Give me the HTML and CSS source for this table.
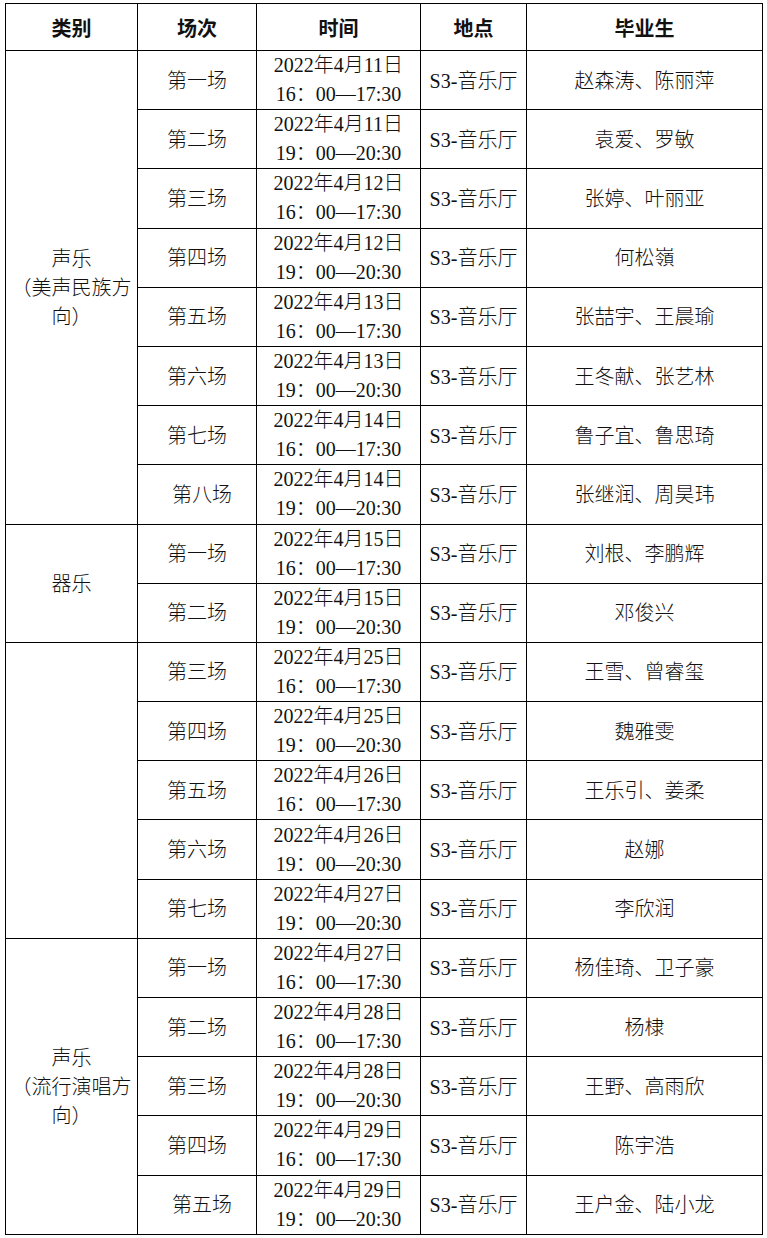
FILE: index.html
```html
<!DOCTYPE html>
<html lang="zh-CN">
<head>
<meta charset="utf-8">
<title>毕业音乐会安排</title>
<link rel="stylesheet" href="styles.css">
</head>
<body>
<table class="schedule">
  <colgroup>
    <col class="c-cat"><col class="c-round"><col class="c-time"><col class="c-place"><col class="c-names">
  </colgroup>
  <thead>
    <tr class="head"><th>类别</th><th>场次</th><th>时间</th><th>地点</th><th>毕业生</th></tr>
  </thead>
  <tbody>
    <tr><td rowspan="8" class="cat">声乐<br>（美声民族方向）</td><td>第一场</td><td class="time">2022年4月11日<br>16：00—17:30</td><td>S3-音乐厅</td><td>赵森涛、陈丽萍</td></tr>
    <tr><td>第二场</td><td class="time">2022年4月11日<br>19：00—20:30</td><td>S3-音乐厅</td><td>袁爱、罗敏</td></tr>
    <tr><td>第三场</td><td class="time">2022年4月12日<br>16：00—17:30</td><td>S3-音乐厅</td><td>张婷、叶丽亚</td></tr>
    <tr><td>第四场</td><td class="time">2022年4月12日<br>19：00—20:30</td><td>S3-音乐厅</td><td>何松嶺</td></tr>
    <tr><td>第五场</td><td class="time">2022年4月13日<br>16：00—17:30</td><td>S3-音乐厅</td><td>张喆宇、王晨瑜</td></tr>
    <tr><td>第六场</td><td class="time">2022年4月13日<br>19：00—20:30</td><td>S3-音乐厅</td><td>王冬献、张艺林</td></tr>
    <tr><td>第七场</td><td class="time">2022年4月14日<br>16：00—17:30</td><td>S3-音乐厅</td><td>鲁子宜、鲁思琦</td></tr>
    <tr><td class="shift">第八场</td><td class="time">2022年4月14日<br>19：00—20:30</td><td>S3-音乐厅</td><td>张继润、周昊玮</td></tr>
    <tr><td rowspan="2" class="cat">器乐</td><td>第一场</td><td class="time">2022年4月15日<br>16：00—17:30</td><td>S3-音乐厅</td><td>刘根、李鹏辉</td></tr>
    <tr><td>第二场</td><td class="time">2022年4月15日<br>19：00—20:30</td><td>S3-音乐厅</td><td>邓俊兴</td></tr>
    <tr><td rowspan="5" class="cat"></td><td>第三场</td><td class="time">2022年4月25日<br>16：00—17:30</td><td>S3-音乐厅</td><td>王雪、曾睿玺</td></tr>
    <tr><td>第四场</td><td class="time">2022年4月25日<br>19：00—20:30</td><td>S3-音乐厅</td><td>魏雅雯</td></tr>
    <tr><td>第五场</td><td class="time">2022年4月26日<br>16：00—17:30</td><td>S3-音乐厅</td><td>王乐引、姜柔</td></tr>
    <tr><td>第六场</td><td class="time">2022年4月26日<br>19：00—20:30</td><td>S3-音乐厅</td><td>赵娜</td></tr>
    <tr><td>第七场</td><td class="time">2022年4月27日<br>19：00—20:30</td><td>S3-音乐厅</td><td>李欣润</td></tr>
    <tr><td rowspan="5" class="cat">声乐<br>（流行演唱方向）</td><td>第一场</td><td class="time">2022年4月27日<br>16：00—17:30</td><td>S3-音乐厅</td><td>杨佳琦、卫子豪</td></tr>
    <tr><td>第二场</td><td class="time">2022年4月28日<br>16：00—17:30</td><td>S3-音乐厅</td><td>杨棣</td></tr>
    <tr><td>第三场</td><td class="time">2022年4月28日<br>19：00—20:30</td><td>S3-音乐厅</td><td>王野、高雨欣</td></tr>
    <tr><td>第四场</td><td class="time">2022年4月29日<br>16：00—17:30</td><td>S3-音乐厅</td><td>陈宇浩</td></tr>
    <tr><td class="shift">第五场</td><td class="time">2022年4月29日<br>19：00—20:30</td><td>S3-音乐厅</td><td>王户金、陆小龙</td></tr>
  </tbody>
</table>
</body>
</html>
```

FILE: styles.css
```css
html, body {
  margin: 0;
  padding: 0;
  background: #fff;
}

body {
  padding: 3px 0 0 5px;
  font-family: "Liberation Serif", "Noto Sans CJK SC", serif;
  font-size: 20px;
  font-weight: 300;
  color: #111;
}

.schedule {
  border-collapse: collapse;
  table-layout: fixed;
  width: 757px;
}

.c-cat { width: 132px; }
.c-round { width: 119px; }
.c-time { width: 164px; }
.c-place { width: 106px; }
.c-names { width: 236px; }

.schedule th,
.schedule td {
  border: 1px solid #000;
  text-align: center;
  vertical-align: middle;
  padding: 2px 4px 0;
  line-height: 29px;
  white-space: nowrap;
}

.schedule td.cat {
  white-space: normal;
  padding: 2px 5px 0;
}

.schedule th {
  font-weight: 700;
  font-family: "Noto Sans CJK SC", sans-serif;
  height: 46px;
  padding: 0;
}

.schedule tbody tr {
  height: 59.2px;
}

.schedule td.time {
  padding: 0;
}

.schedule td.shift {
  padding-left: 14px;
}
```
